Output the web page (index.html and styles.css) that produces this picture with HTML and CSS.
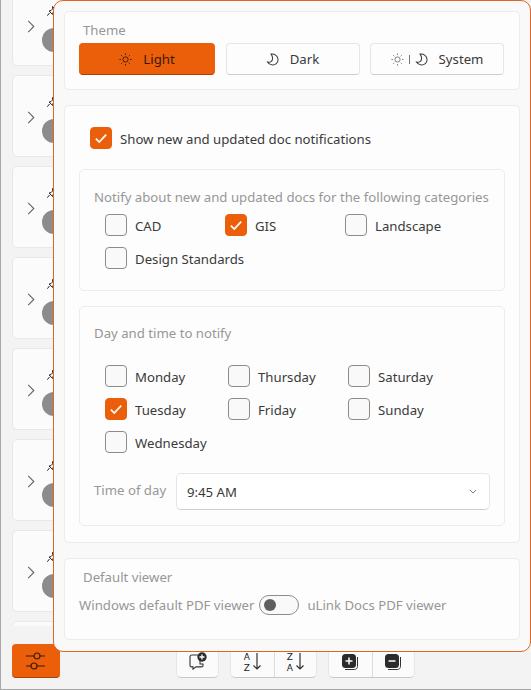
FILE: index.html
```html
<!DOCTYPE html>
<html lang="en">

<head>
  <meta charset="UTF-8">
  <meta name="viewport" content="width=device-width, initial-scale=1.0">
  <title>Settings</title>
  <link rel="stylesheet" href="styles.css">
</head>

<body>
  <svg class="defs" width="0" height="0">
    <symbol id="sun" viewBox="0 0 14 14">
      <circle cx="7" cy="7" r="2.8" fill="none" stroke="currentColor" />
      <path d="M7 .5v1.6M7 11.900v1.600M.5 7h1.600M11.900 7h1.600M2.400 2.400l1.100 1.100M10.500 10.500l1.100 1.100M2.400 11.600l1.100-1.100M10.500 3.500l1.100-1.100" fill="none" stroke="currentColor" />
    </symbol>
    <symbol id="moon" viewBox="0 0 14 14">
      <path d="M5.500 1.200c4 -.4 7.500 2 7.500 6 0 3.500-3 5.800-6.300 5.600-2.200-.1-4.200-1.300-5.200-3 3 .6 5.500-.6 5.600-3.800 0-2-.6-3.500-1.600-4.800z" fill="none" stroke="currentColor" stroke-width="1.100" />
    </symbol>
    <symbol id="check" viewBox="0 0 14 14">
      <path d="M2.500 7.500l3 3 6-6.500" fill="none" stroke="currentColor" stroke-width="1.500" />
    </symbol>
    <symbol id="chevron" viewBox="0 0 10 16">
      <path d="M1.500 1l7 7-7 7" fill="none" stroke="currentColor" stroke-width="1.400" />
    </symbol>
    <symbol id="pin" viewBox="0 0 10 10">
      <path d="M5.500 .5l4 4-1.800.4-1.700 1.700-.4 1.900-3.500-3.500 1.900-.4 1.700-1.700zM2.500 7l-2.200 2.700" fill="none" stroke="currentColor" stroke-width="1" />
    </symbol>
    <symbol id="arrow" viewBox="0 0 8 17">
      <path d="M4 0v16M.5 12.500L4 16l3.500-3.500" fill="none" stroke="#333" stroke-width="1.200" />
    </symbol>
  </svg>

  <div class="card-list">
    <div class="card"><svg class="card-chevron"><use href="#chevron" /></svg><svg class="card-pin"><use href="#pin" /></svg><span class="avatar"></span></div>
    <div class="card"><svg class="card-chevron"><use href="#chevron" /></svg><svg class="card-pin"><use href="#pin" /></svg><span class="avatar"></span></div>
    <div class="card"><svg class="card-chevron"><use href="#chevron" /></svg><svg class="card-pin"><use href="#pin" /></svg><span class="avatar"></span></div>
    <div class="card"><svg class="card-chevron"><use href="#chevron" /></svg><svg class="card-pin"><use href="#pin" /></svg><span class="avatar"></span></div>
    <div class="card"><svg class="card-chevron"><use href="#chevron" /></svg><svg class="card-pin"><use href="#pin" /></svg><span class="avatar"></span></div>
    <div class="card"><svg class="card-chevron"><use href="#chevron" /></svg><svg class="card-pin"><use href="#pin" /></svg><span class="avatar"></span></div>
    <div class="card"><svg class="card-chevron"><use href="#chevron" /></svg><svg class="card-pin"><use href="#pin" /></svg><span class="avatar"></span></div>
    <div class="card"></div>
  </div>

  <div class="toolbar">
    <button class="settings-btn">
      <svg width="20" height="18" viewBox="0 0 20 18">
        <path d="M0 4h8M14 4h5M0 14h5M11 14h8" fill="none" stroke="#3a1a05" stroke-width="1.200" />
        <circle cx="11" cy="4" r="3" fill="none" stroke="#3a1a05" stroke-width="1.200" />
        <circle cx="8" cy="14" r="3" fill="none" stroke="#3a1a05" stroke-width="1.200" />
      </svg>
    </button>
    <div class="tool-groups">
      <div class="tool-group">
        <button class="tool-btn comment-btn">
          <svg width="20" height="20" viewBox="0 0 20 20">
            <path d="M5 4h7v9h3v1.500c0 .8-.6 1.400-1.500 1.400H8l-3 2.200v-2.200H3.500C2.600 15.900 2 15.300 2 14.500V6c0-1.200.8-2 2-2z" fill="none" stroke="#333" stroke-width="1.100" />
            <circle cx="14" cy="6" r="4.700" fill="#2b2b2b" />
            <path d="M14 3.500v5M11.500 6h5" stroke="#fff" stroke-width="1.300" />
          </svg>
        </button>
      </div>
      <div class="tool-group">
        <button class="tool-btn sort-btn">
          <span class="sort-text"><span>A</span><span>Z</span></span>
          <svg class="sort-arrow"><use href="#arrow" /></svg>
        </button>
        <button class="tool-btn sort-btn">
          <span class="sort-text"><span>Z</span><span>A</span></span>
          <svg class="sort-arrow"><use href="#arrow" /></svg>
        </button>
      </div>
      <div class="tool-group">
        <button class="tool-btn">
          <svg width="16" height="16" viewBox="0 0 16 16">
            <path d="M15.500 3v9.500c0 1.700-1.300 3-3 3H3" fill="none" stroke="#333" />
            <rect x="0" y="0" width="14" height="14" rx="3.500" fill="#2b2b2b" />
            <path d="M7 3.500v7M3.500 7h7" stroke="#fff" stroke-width="1.500" />
          </svg>
        </button>
        <button class="tool-btn">
          <svg width="16" height="16" viewBox="0 0 16 16">
            <path d="M15.500 3v9.500c0 1.700-1.300 3-3 3H3" fill="none" stroke="#333" />
            <rect x="0" y="0" width="14" height="14" rx="3.500" fill="#2b2b2b" />
            <path d="M3.500 7h7" stroke="#fff" stroke-width="1.500" />
          </svg>
        </button>
      </div>
    </div>
  </div>

  <!-- settings flyout, sits over the list -->
  <div class="panel">
    <section class="box theme-box">
      <div class="box-title theme-title">Theme</div>
      <div class="theme-row">
        <button class="theme-btn active"><svg class="ic"><use href="#sun" /></svg>Light</button>
        <button class="theme-btn"><svg class="ic"><use href="#moon" /></svg>Dark</button>
        <button class="theme-btn"><svg class="ic"><use href="#sun" /></svg><span class="sep"></span><svg class="ic"><use href="#moon" /></svg>System</button>
      </div>
    </section>

    <section class="box notify-box">
      <label class="check master-check"><span class="tick on"><svg><use href="#check" /></svg></span>Show new and updated doc notifications</label>

      <div class="inner categories">
        <div class="box-title">Notify about new and updated docs for the following categories</div>
        <div class="check-grid cat-grid">
          <label class="check"><span class="tick"></span>CAD</label>
          <label class="check"><span class="tick on"><svg><use href="#check" /></svg></span>GIS</label>
          <label class="check"><span class="tick"></span>Landscape</label>
          <label class="check wide"><span class="tick"></span>Design Standards</label>
        </div>
      </div>

      <div class="inner schedule">
        <div class="box-title">Day and time to notify</div>
        <div class="check-grid day-grid">
          <label class="check"><span class="tick"></span>Monday</label>
          <label class="check"><span class="tick"></span>Thursday</label>
          <label class="check"><span class="tick"></span>Saturday</label>
          <label class="check"><span class="tick on"><svg><use href="#check" /></svg></span>Tuesday</label>
          <label class="check"><span class="tick"></span>Friday</label>
          <label class="check"><span class="tick"></span>Sunday</label>
          <label class="check"><span class="tick"></span>Wednesday</label>
        </div>
        <div class="time-row">
          <span class="time-label">Time of day</span>
          <div class="select">9:45 AM
            <svg width="8" height="5" viewBox="0 0 10 6"><path d="M1 1l4 4 4-4" fill="none" stroke="#777" stroke-width="1.200" /></svg>
          </div>
        </div>
      </div>
    </section>

    <section class="box viewer-box">
      <div class="box-title viewer-title">Default viewer</div>
      <div class="viewer-row">
        <span>Windows default PDF viewer</span>
        <span class="toggle"><span class="knob"></span></span>
        <span>uLink Docs PDF viewer</span>
      </div>
    </section>
  </div>
</body>

</html>
```
FILE: styles.css
```css
html,
body {
  height: 100%;
}

body {
  position: relative;
  margin: 0;
  height: 690px;
  overflow: hidden;
  box-sizing: border-box;
  background-color: #f3f3f3;
  border-left: 1px solid #a8a8a8;
  border-bottom: 1px solid #a8a8a8;
  font-family: "Noto Sans", sans-serif;
  font-size: 13.2px;
  color: #3a3a3a;
}

.defs {
  position: absolute;
}

button {
  font: inherit;
  color: inherit;
  padding: 0;
  cursor: pointer;
}

/* list behind the flyout */

.card-list {
  height: 626px;
  overflow: hidden;
  padding-left: 11px;
}

.card {
  position: relative;
  box-sizing: border-box;
  width: 100px;
  height: 82px;
  margin-bottom: 9px;
  background-color: #fbfbfb;
  border: 1px solid #e8e8e8;
  border-radius: 5px;
}

.card:first-child {
  margin-top: -16px;
}

.card-chevron {
  position: absolute;
  left: 14px;
  top: 35px;
  width: 8px;
  height: 13px;
  color: #666;
}

.card-pin {
  position: absolute;
  left: 34px;
  top: 21px;
  width: 10px;
  height: 10px;
  color: #222;
}

.avatar {
  position: absolute;
  left: 29px;
  top: 43px;
  width: 24px;
  height: 24px;
  border-radius: 50%;
  background-color: #8c8c8c;
}

/* bottom bar */

.toolbar {
  display: flex;
  align-items: flex-end;
  height: 52px;
  padding-left: 11px;
}

.settings-btn {
  display: flex;
  align-items: center;
  justify-content: center;
  width: 48px;
  height: 34px;
  background-color: #ec5f0a;
  border: none;
  border-bottom: 1px solid #a84305;
  border-radius: 4px;
}

.tool-groups {
  display: flex;
  gap: 11px;
  margin-left: 116px;
}

.tool-group {
  display: flex;
  height: 34px;
  background-color: #fbfbfb;
  border: 1px solid #e6e6e6;
  border-bottom-color: #c8c8c8;
  border-radius: 5px;
  box-sizing: border-box;
}

.tool-btn {
  display: flex;
  align-items: flex-end;
  justify-content: center;
  width: 42.5px;
  padding-bottom: 7px;
  background: none;
  border: none;
  border-left: 1px solid #dcdcdc;
}

.tool-btn:first-child {
  border-left: none;
}

.comment-btn {
  width: 41px;
  padding-bottom: 6px;
}

.sort-btn {
  gap: 3px;
  padding-bottom: 4px;
}

.sort-text {
  display: flex;
  flex-direction: column;
  align-items: center;
  font-family: "DejaVu Sans", sans-serif;
  font-size: 9px;
  line-height: 10.500px;
  color: #222;
}

.sort-arrow {
  width: 8px;
  height: 17px;
  margin-bottom: 3px;
}

/* flyout */

.panel {
  position: absolute;
  left: 52px;
  top: 0;
  right: 0;
  height: 652px;
  box-sizing: border-box;
  padding: 10px 10px 0 10px;
  background-color: #f9f9f9;
  border: 1px solid #e0651f;
  border-radius: 10px;
}

.box {
  box-sizing: border-box;
  background-color: #fdfdfd;
  border: 1px solid #ececec;
  border-radius: 5px;
  margin-bottom: 15px;
}

.box-title {
  color: #979797;
  line-height: 18px;
}

.theme-box {
  height: 79px;
  padding: 9px 14px 0 14px;
}

.theme-title {
  padding-left: 4px;
}

.theme-row {
  display: flex;
  gap: 10.5px;
  margin-top: 4px;
}

.theme-btn {
  display: flex;
  align-items: center;
  justify-content: center;
  flex: none;
  width: 134px;
  height: 32px;
  background-color: #fdfdfd;
  border: 1px solid #e6e6e6;
  border-bottom-color: #cfcfcf;
  border-radius: 4px;
}

.theme-btn.active {
  width: 136px;
  background-color: #ec5f0a;
  border-color: #ec5f0a;
  border-bottom-color: #a84305;
  color: #3a1a05;
}

.ic {
  width: 13px;
  height: 13px;
  margin-right: 11px;
}

.theme-btn:last-child .ic:first-child {
  margin-right: 5px;
  color: #777;
}

.sep {
  width: 1px;
  height: 9px;
  margin-right: 5px;
  background-color: #777;
}

.notify-box {
  height: 438px;
  padding: 21px 14px 0 14px;
}

.check {
  display: flex;
  align-items: flex-start;
  gap: 8px;
  height: 22px;
  line-height: 24px;
  white-space: nowrap;
}

.tick {
  flex: none;
  box-sizing: border-box;
  display: flex;
  align-items: center;
  justify-content: center;
  width: 22px;
  height: 22px;
  background-color: #f9f9f9;
  border: 1px solid #8c8c8c;
  border-radius: 4px;
}

.tick.on {
  background-color: #ec5f0a;
  border-color: #ec5f0a;
  color: #fff;
}

.tick svg {
  width: 16px;
  height: 16px;
}

.master-check {
  margin-left: 11px;
}

.inner {
  box-sizing: border-box;
  margin-top: 15px;
  background-color: #fdfdfd;
  border: 1px solid #ececec;
  border-radius: 5px;
  padding: 18px 0 0 14px;
}

.categories {
  height: 122px;
  margin-top: 20px;
}

.schedule {
  height: 220px;
  padding-top: 17px;
}

.check-grid {
  display: grid;
  row-gap: 11px;
  padding-left: 11px;
}

.cat-grid {
  grid-template-columns: 120px 120px 120px;
  margin-top: 8px;
}

.wide {
  grid-column: span 2;
}

.day-grid {
  grid-template-columns: 123px 120px 120px;
  margin-top: 23px;
}

.time-row {
  display: flex;
  align-items: center;
  gap: 9px;
  margin-top: 20px;
}

.time-label {
  flex: none;
  width: 73px;
  margin-top: -3px;
  white-space: nowrap;
  color: #979797;
}

.select {
  display: flex;
  align-items: center;
  justify-content: space-between;
  box-sizing: border-box;
  width: 314px;
  height: 37px;
  padding: 0 12px 0 10px;
  background-color: #fff;
  border: 1px solid #e6e6e6;
  border-bottom-color: #cfcfcf;
  border-radius: 5px;
}

.viewer-box {
  height: 82px;
  padding: 9px 14px 0 14px;
}

.viewer-title {
  padding-left: 4px;
}

.viewer-row {
  display: flex;
  align-items: center;
  margin-top: 9px;
  color: #979797;
}

.toggle {
  display: flex;
  align-items: center;
  box-sizing: border-box;
  width: 40px;
  height: 20px;
  margin: 0 8px 0 5px;
  padding-left: 4px;
  background-color: #f9f9f9;
  border: 1px solid #8c8c8c;
  border-radius: 10px;
}

.knob {
  width: 12px;
  height: 12px;
  border-radius: 50%;
  background-color: #5f5f5f;
}
```
